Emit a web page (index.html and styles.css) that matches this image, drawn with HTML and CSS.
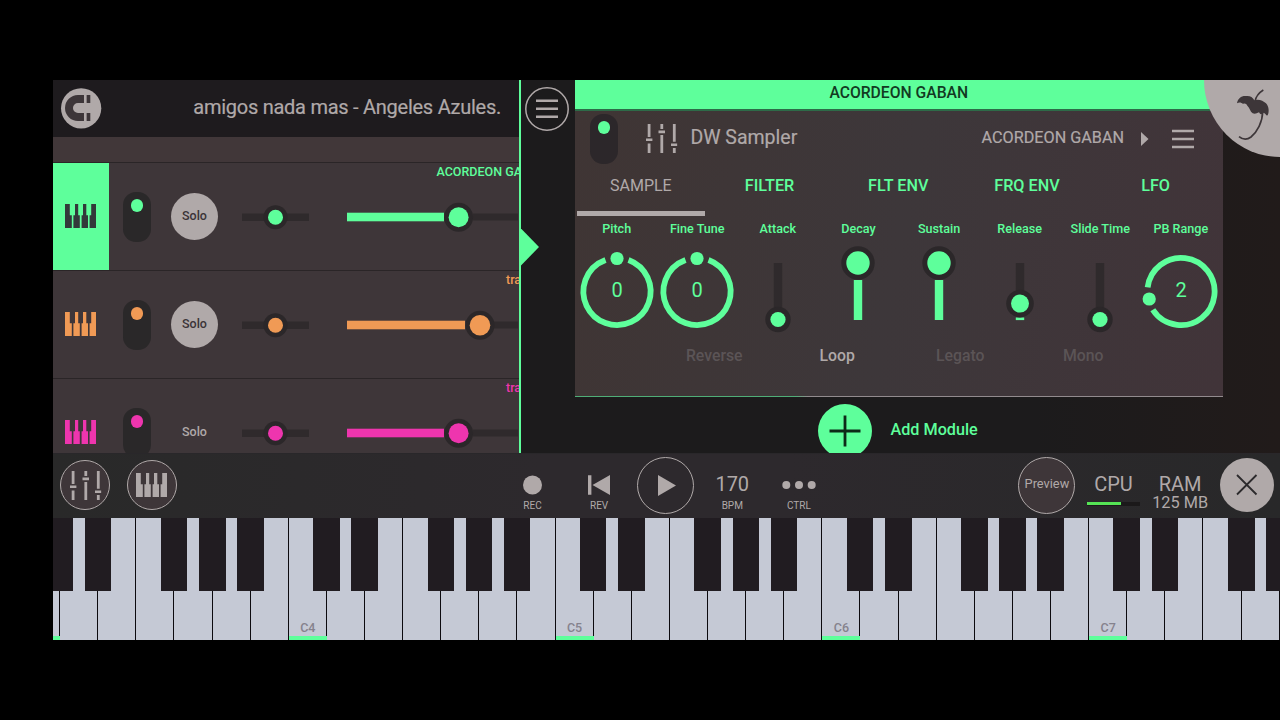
FILE: index.html
```html
<!DOCTYPE html>
<html lang="en">

<head>
    <meta charset="UTF-8">
    <meta name="viewport" content="width=device-width, initial-scale=1.0">
    <title>DW Sampler</title>
    <link rel="stylesheet" href="styles.css">
</head>

<body>

    <!-- shared icons -->
    <svg class="defs">
        <symbol id="piano" viewBox="0 0 31 24">
            <path d="M0 0h4.8v11.3h2V24H0zM10 0h3.2v11.3h1.6V24H8.4V11.3H10zM18 0h3.3v11.3H23V24h-6.4V11.3H18zM26.2 0H31v24h-6.4V11.3h1.6z" />
        </symbol>
        <symbol id="mixer" viewBox="0 0 31.4 29">
            <path d="M1.7 0h2.8v13H1.7zM0 14.4h6.4V17H0zM1.7 19.4h2.8V29H1.7zM14.4 0h2.8v5h-2.8zM12.5 6.6H19v2.6h-6.5zM14.4 11h2.8v18h-2.8zM26.9 0h2.8v17.8h-2.8zM25 19.4h6.4V22H25zM26.9 24h2.8v5h-2.8z" />
        </symbol>
    </svg>

    <div class="app">
        <div class="workspace">

            <!-- track list -->
            <div class="tracks">
                <div class="song">
                    <svg class="magnet" viewBox="33 36 121 122">
                        <circle cx="93.5" cy="97" r="60.5" fill="#b0a9a9" />
                        <path d="M102 57H84A39 39 0 0 0 84 135H102V111H84a15 15 0 0 1 0-30H102zM110 57h11v24h-11zM110 111h11v24h-11z" fill="#3d3639" />
                    </svg>
                    <span class="song-name">amigos nada mas - Angeles Azules.</span>
                </div>
                <div class="ruler"></div>

                <div class="track green selected">
                    <div class="track-icon"><svg class="piano"><use href="#piano" /></svg></div>
                    <div class="toggle"></div>
                    <div class="solo on">Solo</div>
                    <svg class="pan" viewBox="0 0 67 30">
                        <rect class="rail" y="11.5" width="67" height="7.5" />
                        <circle class="halo" cx="33.5" cy="15.2" r="12" />
                        <circle cx="33.5" cy="15.2" r="7.5" />
                    </svg>
                    <svg class="volume" viewBox="0 0 171 34">
                        <rect class="rail" x="126" y="13.5" width="45" height="7" />
                        <rect y="12.7" width="97" height="8.6" />
                        <circle class="halo" cx="111.6" cy="17.2" r="14.5" />
                        <circle cx="111.6" cy="17.2" r="10" />
                    </svg>
                    <div class="track-name">ACORDEON GABAN</div>
                </div>

                <div class="track orange">
                    <div class="track-icon"><svg class="piano"><use href="#piano" /></svg></div>
                    <div class="toggle"></div>
                    <div class="solo on">Solo</div>
                    <svg class="pan" viewBox="0 0 67 30">
                        <rect class="rail" y="11.5" width="67" height="7.5" />
                        <circle class="halo" cx="33.5" cy="15.2" r="12" />
                        <circle cx="33.5" cy="15.2" r="7.5" />
                    </svg>
                    <svg class="volume" viewBox="0 0 171 34">
                        <rect class="rail" x="145" y="13.5" width="26" height="7" />
                        <rect y="12.7" width="118" height="8.6" />
                        <circle class="halo" cx="133" cy="17.2" r="14.5" />
                        <circle cx="133" cy="17.2" r="10.3" />
                    </svg>
                    <div class="track-name short">track</div>
                </div>

                <div class="track pink">
                    <div class="track-icon"><svg class="piano"><use href="#piano" /></svg></div>
                    <div class="toggle"></div>
                    <div class="solo">Solo</div>
                    <svg class="pan" viewBox="0 0 67 30">
                        <rect class="rail" y="11.5" width="67" height="7.5" />
                        <circle class="halo" cx="33.5" cy="15.2" r="12" />
                        <circle cx="33.5" cy="15.2" r="7.5" />
                    </svg>
                    <svg class="volume" viewBox="0 0 171 34">
                        <rect class="rail" x="126" y="13.5" width="45" height="7" />
                        <rect y="12.7" width="97" height="8.6" />
                        <circle class="halo" cx="111.6" cy="17.2" r="14.5" />
                        <circle cx="111.6" cy="17.2" r="10" />
                    </svg>
                    <div class="track-name short">track</div>
                </div>
            </div>

            <div class="divider">
                <svg class="menu-round" viewBox="0 0 44 44">
                    <circle cx="22" cy="22" r="21.2" fill="none" stroke="#b0a9a9" stroke-width="1.5" />
                    <path d="M11 13.7h22M11 21.7h22M11 29.7h22" stroke="#b0a9a9" stroke-width="2.6" />
                </svg>
                <div class="pointer"></div>
            </div>

            <!-- modules -->
            <div class="rack">
                <div class="module">
                    <div class="module-title">ACORDEON GABAN</div>
                    <div class="module-head">
                        <div class="toggle"></div>
                        <svg class="mixer"><use href="#mixer" /></svg>
                        <span class="module-name">DW Sampler</span>
                        <span class="preset">ACORDEON GABAN</span>
                        <svg class="next" viewBox="0 0 8 14"><path d="M0 0l7.5 7L0 14z" /></svg>
                        <svg class="menu" viewBox="0 0 22 20"><path d="M0 2h22M0 10h22M0 18h22" stroke="#b0a9a9" stroke-width="2.4" /></svg>
                    </div>
                    <div class="tabs">
                        <div class="tab active">SAMPLE</div>
                        <div class="tab">FILTER</div>
                        <div class="tab">FLT ENV</div>
                        <div class="tab">FRQ ENV</div>
                        <div class="tab">LFO</div>
                    </div>
                    <div class="controls">
                        <div class="control">
                            <label>Pitch</label>
                            <svg viewBox="0 0 80 84">
                                <circle class="ring" cx="40" cy="46.5" r="33.6" pathLength="360" transform="rotate(-70 40 46.5)" />
                                <circle cx="40" cy="13.5" r="6.6" />
                                <text x="40" y="51.5">0</text>
                            </svg>
                        </div>
                        <div class="control">
                            <label>Fine Tune</label>
                            <svg viewBox="0 0 80 84">
                                <circle class="ring" cx="40" cy="46.5" r="33.6" pathLength="360" transform="rotate(-70 40 46.5)" />
                                <circle cx="40" cy="13.5" r="6.6" />
                                <text x="40" y="51.5">0</text>
                            </svg>
                        </div>
                        <div class="control">
                            <label>Attack</label>
                            <svg viewBox="0 0 80 84">
                                <rect class="rail" x="35.8" y="18" width="8.4" height="57" />
                                <circle class="halo" cx="40" cy="74.5" r="12.7" />
                                <circle cx="40" cy="74.5" r="7.6" />
                            </svg>
                        </div>
                        <div class="control">
                            <label>Decay</label>
                            <svg viewBox="0 0 80 84">
                                <circle class="halo" cx="40" cy="18" r="16.7" />
                                <rect x="35.8" y="35" width="8.4" height="40" />
                                <circle cx="40" cy="18" r="11.7" />
                            </svg>
                        </div>
                        <div class="control">
                            <label>Sustain</label>
                            <svg viewBox="0 0 80 84">
                                <circle class="halo" cx="40" cy="18" r="16.7" />
                                <rect x="35.8" y="35" width="8.4" height="40" />
                                <circle cx="40" cy="18" r="11.7" />
                            </svg>
                        </div>
                        <div class="control">
                            <label>Release</label>
                            <svg viewBox="0 0 80 84">
                                <rect class="rail" x="35.8" y="18" width="8.4" height="40" />
                                <rect x="35.8" y="72.5" width="8.4" height="2.6" />
                                <circle class="halo" cx="40" cy="58.6" r="13.8" />
                                <circle cx="40" cy="58.6" r="9" />
                            </svg>
                        </div>
                        <div class="control">
                            <label>Slide Time</label>
                            <svg viewBox="0 0 80 84">
                                <rect class="rail" x="35.8" y="18" width="8.4" height="57" />
                                <circle class="halo" cx="40" cy="74.5" r="12.7" />
                                <circle cx="40" cy="74.5" r="7.6" />
                            </svg>
                        </div>
                        <div class="control">
                            <label>PB Range</label>
                            <svg viewBox="0 0 80 84">
                                <circle class="ring" cx="40" cy="46.5" r="33.6" pathLength="360" transform="rotate(187 40 46.5)" />
                                <circle cx="8.2" cy="54" r="6.6" />
                                <text x="40" y="51.5">2</text>
                            </svg>
                        </div>
                    </div>
                    <div class="options">
                        <span>Reverse</span>
                        <span class="on">Loop</span>
                        <span>Legato</span>
                        <span>Mono</span>
                    </div>
                </div>
                <div class="add">
                    <svg class="plus" viewBox="0 0 54 54">
                        <circle cx="27" cy="27" r="27" fill="#5eff9b" />
                        <path d="M11.5 27h31M27 11.5v31" stroke="#0d2a18" stroke-width="2.8" />
                    </svg>
                    <span>Add Module</span>
                </div>
            </div>

            <!-- corner logo -->
            <div class="corner">
                <svg viewBox="942 12 228 231">
                    <path d="M1120 42C1107 50 1098 61 1095 76" fill="none" stroke="#3d3639" stroke-width="4.5" />
                    <path d="M1041 82C1043 66 1056 58 1069 60C1080 59 1088 63 1093 73C1105 68 1119 73 1128 82C1137 91 1138 108 1133 118C1128 120 1127 112 1121 110C1116 115 1111 117 1107 109C1100 113 1094 115 1088 112C1080 106 1079 95 1072 89C1069 83 1064 81 1059 84C1054 79 1047 78 1041 82Z" fill="#3d3639" />
                    <path d="M1118 106C1118 138 1101 168 1083 183C1070 193 1058 191 1047 182" fill="none" stroke="#3d3639" stroke-width="5" />
                </svg>
            </div>
        </div>

        <!-- transport bar -->
        <div class="toolbar">
            <div class="group">
                <div class="cell"><div class="round"><svg class="mixer"><use href="#mixer" /></svg></div></div>
                <div class="cell"><div class="round"><svg class="piano"><use href="#piano" /></svg></div></div>
            </div>
            <div class="group transport">
                <div class="cell">
                    <svg class="glyph" viewBox="0 0 36 24"><circle cx="18.5" cy="12" r="9.5" /></svg>
                    <small>REC</small>
                </div>
                <div class="cell">
                    <svg class="glyph" viewBox="0 0 36 24"><path d="M7 2.2h3.4v19.6H7zM29 2v20L11.5 12z" /></svg>
                    <small>REV</small>
                </div>
                <div class="cell">
                    <div class="round big clear"><svg class="play" viewBox="0 0 18 21"><path d="M0 0l18 10.5L0 21z" /></svg></div>
                </div>
                <div class="cell"><b>170</b><small>BPM</small></div>
                <div class="cell">
                    <svg class="glyph" viewBox="0 0 36 24"><circle cx="5.3" cy="12" r="4" /><circle cx="18" cy="12" r="4" /><circle cx="30.7" cy="12" r="4" /></svg>
                    <small>CTRL</small>
                </div>
            </div>
            <div class="group status">
                <div class="cell"><div class="round big">Preview</div></div>
                <div class="cell"><b>CPU</b><div class="meter"><div class="meter-fill" style="width: 64%"></div></div></div>
                <div class="cell"><b class="ram">RAM</b><span class="mb">125 MB</span></div>
                <div class="cell">
                    <svg class="close" viewBox="0 0 54 54">
                        <circle cx="27" cy="27" r="27" fill="#b0a9a9" />
                        <path d="M17 17l19.5 19.5M36.5 17L17 36.5" stroke="#2c2a2c" stroke-width="1.8" />
                    </svg>
                </div>
            </div>
        </div>

        <div class="keyboard" id="keyboard"></div>
    </div>

    <script>
        const keyboard = document.getElementById('keyboard')
        const notes = ['C', 'D', 'E', 'F', 'G', 'A', 'B']

        // white keys from C3, the black ones hang on the right side of C D F G A
        for (let i = 0; i < 34; i++) {
            const note = notes[i % 7]
            const octave = 3 + Math.floor(i / 7)
            const key = document.createElement('div')
            key.classList.add('key')
            if (note == 'C') {
                key.classList.add('c')
                if (octave > 3) key.innerHTML = note + octave
            }
            if (note != 'E' && note != 'B') {
                key.classList.add('sharp')
            }
            keyboard.appendChild(key)
        }
    </script>
</body>

</html>
```
FILE: styles.css
```css
* {
    padding: 0;
    margin: 0;
    box-sizing: border-box;
}

body {
    background-color: #000;
    font-family: Roboto, "Liberation Sans", sans-serif;
    color: #b0a9a9;
    overflow: hidden;
}

svg {
    display: block;
    flex: none;
    fill: currentColor;
    overflow: visible;
}

.defs {
    display: none;
}

.app {
    margin: 80px 0 80px 53px;
    width: 1227px;
    height: 560px;
    display: flex;
    flex-direction: column;
    overflow: hidden;
}

.workspace {
    position: relative;
    display: flex;
    height: 372.5px;
    overflow: hidden;
    background: linear-gradient(90deg, #1c1b1c 80%, #211b1a);
}

.green { color: #5eff9b; }
.orange { color: #f09a55; }
.pink { color: #ee35ae; }

.rail { fill: #2f2a2c; }
.halo { fill: #2b2729; }

.piano {
    width: 31px;
    height: 24px;
}

.mixer {
    width: 31.4px;
    height: 29px;
}

/* tracks */
.tracks {
    width: 466px;
    overflow: hidden;
    background-color: #3e3639;
}

.song {
    height: 57px;
    display: flex;
    align-items: center;
    justify-content: space-between;
    padding: 0 18px 0 8px;
    background-color: #1e1b1e;
}

.magnet {
    width: 40.3px;
    height: 40.6px;
}

.song-name {
    font-size: 20px;
    letter-spacing: -0.26px;
    padding-bottom: 3px;
    -webkit-text-stroke: 0.2px;
}

.ruler {
    height: 26px;
    background-color: #413739;
    border-bottom: 1px solid #2a2527;
}

.track {
    position: relative;
    height: 108px;
    display: flex;
    align-items: center;
    border-bottom: 1px solid #2a2527;
}

.track-icon {
    width: 56px;
    height: 107px;
    display: flex;
    align-items: center;
    justify-content: center;
    padding: 0 1px 2px 0;
}

.selected .track-icon {
    background-color: #5eff9b;
    color: #33383a;
}

.toggle {
    width: 28px;
    height: 50px;
    border-radius: 13px;
    background-color: #2a2829;
    color: inherit;
}

.toggle::before {
    content: "";
    display: block;
    width: 12.6px;
    height: 12.6px;
    margin: 7.5px auto 0;
    border-radius: 50%;
    background-color: currentColor;
}

.track .toggle {
    margin-left: 14px;
}

.solo {
    width: 47px;
    height: 47px;
    margin-left: 20px;
    border-radius: 50%;
    color: #b0a9a9;
    font-size: 12.5px;
    font-weight: 500;
    line-height: 46px;
    text-align: center;
}

.solo.on {
    background-color: #b0a9a9;
    color: #3b3437;
}

.pan {
    width: 67px;
    height: 30px;
    margin-left: 24px;
}

.volume {
    width: 171px;
    height: 34px;
    margin-left: 38px;
}

.track-name {
    position: absolute;
    left: 383.5px;
    top: 0;
    font-size: 12.5px;
    font-weight: 500;
    line-height: 17px;
    white-space: nowrap;
}

.track-name.short {
    left: 453px;
}

/* strip between tracks and rack */
.divider {
    position: relative;
    width: 56px;
    border-left: 2px solid #5eff9b;
    padding: 6.5px 0 0 3.5px;
}

.menu-round {
    width: 44px;
    height: 44px;
}

.pointer {
    position: absolute;
    left: 0;
    top: 148.5px;
    width: 18px;
    height: 37px;
    background-color: #5eff9b;
    clip-path: polygon(0 0, 100% 50%, 0 100%);
}

/* rack */
.rack {
    width: 647.5px;
}

.module {
    height: 317px;
    background: linear-gradient(100deg, #3f3534, #3d373a 50%, #413439);
    border-bottom: 1.5px solid #8b8587;
    border-image: linear-gradient(90deg, #4fae77 34%, #928b8e 36%) 1;
    border-width: 0 0 1.5px;
}

.module-title {
    height: 31px;
    background-color: #5eff9b;
    border-bottom: 2px solid #2d6b48;
    color: #123a22;
    font-size: 15.7px;
    font-weight: 500;
    line-height: 25px;
    text-align: center;
}

.module-head {
    display: flex;
    align-items: center;
    height: 55px;
    padding: 0 27.5px 0 15px;
}

.module-head .toggle {
    color: #5eff9b;
    background-color: #2c272a;
}

.module-head .mixer {
    margin-left: 27.5px;
}

.module-name {
    margin-left: 13.5px;
    font-size: 19.5px;
    padding-bottom: 3px;
    -webkit-text-stroke: 0.2px;
}

.preset {
    margin-left: auto;
    font-size: 16.2px;
    padding-bottom: 3px;
    -webkit-text-stroke: 0.2px;
}

.next {
    width: 8px;
    height: 14px;
    margin-left: 17px;
}

.menu {
    width: 22px;
    height: 20px;
    margin-left: 23px;
    margin-right: 1px;
}

.tabs {
    display: grid;
    grid-template-columns: repeat(5, 128.7px);
    height: 50px;
    padding-left: 1.5px;
}

.tab {
    height: 49.5px;
    color: #5eff9b;
    font-size: 16.2px;
    font-weight: 500;
    line-height: 40px;
    text-align: center;
}

.tab.active {
    color: #b0a9a9;
    border-bottom: 5px solid #b0a9a9;
    font-size: 16px;
    font-weight: normal;
}

.controls {
    display: grid;
    grid-template-columns: repeat(8, 80.6px);
    padding-left: 1.4px;
    color: #5eff9b;
}

.control {
    display: flex;
    flex-direction: column;
    align-items: center;
    height: 118px;
}

.control label {
    font-size: 12.6px;
    font-weight: 500;
    line-height: 25px;
    height: 29px;
}

.control svg {
    width: 80px;
    height: 84px;
}

.control text {
    font-size: 20px;
    text-anchor: middle;
}

.ring {
    fill: none;
    stroke: currentColor;
    stroke-width: 5.8;
    stroke-dasharray: 320 40;
}

.options {
    display: grid;
    grid-template-columns: repeat(4, 123px);
    justify-content: center;
    font-size: 15.8px;
    font-weight: 500;
    line-height: 44px;
    text-align: center;
    color: #5b5456;
}

.options .on {
    color: #b0a9a9;
}

.add {
    display: flex;
    align-items: center;
    height: 68px;
    padding-left: 243px;
    color: #5eff9b;
    font-size: 16.2px;
    font-weight: 500;
}

.plus {
    width: 54px;
    height: 54px;
    margin-right: 18.5px;
}

.add span {
    padding-bottom: 4px;
}

.corner {
    position: absolute;
    right: 0;
    top: 0;
    width: 76px;
    height: 77px;
    background-color: #b0a9a9;
    border-bottom-left-radius: 100%;
}

/* toolbar */
.toolbar {
    display: flex;
    height: 65.5px;
    background: linear-gradient(90deg, #292929, #2d292d 40%, #2d292d 60%, #282829);
    border-top: 1px solid #29272a;
}

.group {
    display: flex;
    margin-left: -1px;
}

.transport {
    margin-left: 314px;
}

.status {
    margin-left: auto;
}

.cell {
    width: 66.6px;
    display: flex;
    flex-direction: column;
    align-items: center;
    padding-top: 19.5px;
}

.round {
    display: flex;
    align-items: center;
    justify-content: center;
    width: 50px;
    height: 50px;
    margin-top: -13px;
    border: 1.5px solid #b0a9a9;
    border-radius: 50%;
    background-color: #3e3639;
    font-size: 12.8px;
    line-height: 16px;
}

.round.big {
    width: 57px;
    height: 57px;
    margin-top: -16.5px;
    padding-bottom: 3px;
}

.round.clear {
    background-color: transparent;
    padding-bottom: 0;
}

.play {
    width: 18px;
    height: 21px;
    margin-left: 3px;
}

.glyph {
    width: 36px;
    height: 24px;
}

.cell small {
    font-size: 10px;
    line-height: 14px;
    margin-top: 2px;
}

.cell b {
    font-size: 20px;
    font-weight: normal;
    line-height: 24px;
    margin-top: -1.5px;
    margin-bottom: 1.5px;
}

.cell .ram {
    line-height: 20px;
    margin-top: 0.5px;
    margin-bottom: 0;
}

.mb {
    font-size: 16.3px;
    line-height: 18px;
}

.meter {
    width: 53px;
    height: 4px;
    margin-top: 5px;
    background-color: #1b191a;
}

.meter-fill {
    height: 3.4px;
    background-color: #55e455;
}

.close {
    width: 54px;
    height: 54px;
    margin-top: -15px;
}

/* keyboard */
.keyboard {
    display: flex;
    height: 122px;
    margin-left: -31px;
    background-color: #c5c9d5;
}

.key {
    position: relative;
    flex: none;
    width: 38.12px;
    height: 122px;
    padding-top: 101px;
    border-right: 1.5px solid #0c0a0e;
    background-color: #c5c9d5;
    color: #85828d;
    font-size: 12.5px;
    font-weight: 500;
    line-height: 18px;
    text-align: center;
}

.key.c {
    border-bottom: 4.5px solid #5eff9b;
    border-right: none;
    box-shadow: inset -1px 0 #0c0a0e;
}

.key.sharp::after {
    content: "";
    position: absolute;
    z-index: 1;
    top: 0;
    right: -12.8px;
    width: 26.5px;
    height: 72.5px;
    background-color: #211c21;
}

.key.sharp:not(.c)::after {
    right: -14px;
}
```
